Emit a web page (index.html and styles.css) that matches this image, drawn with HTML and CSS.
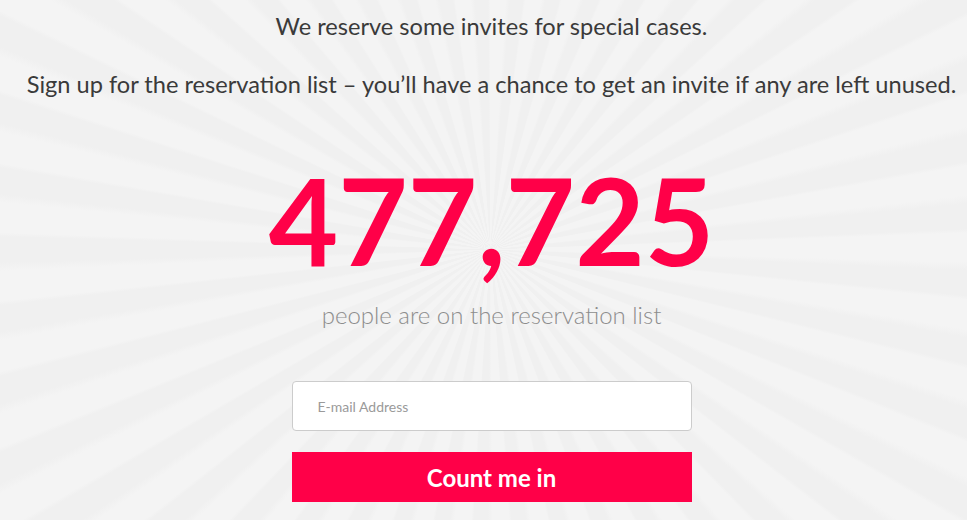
FILE: index.html
```html
<!DOCTYPE html>
<html>
<head>
<meta charset="utf-8">
<link rel="stylesheet" href="styles.css">
</head>
<body>
<main class="page">
  <p class="lead">We reserve some invites for special cases.</p>
  <p class="lead">Sign up for the reservation list – you’ll have a chance to get an invite if any are left unused.</p>
  <div class="count">477,725</div>
  <p class="sub">people are on the reservation list</p>
  <form class="form">
    <input class="email" type="text" placeholder="E-mail Address">
    <button class="btn" type="button">Count me in</button>
  </form>
</main>
</body>
</html>
```

FILE: styles.css
```css
html, body {
  margin: 0;
  padding: 0;
  height: 100%;
}
body {
  font-family: Lato, "Open Sans", sans-serif;
  background: repeating-conic-gradient(from 0deg at 50.7% 48%, #f4f4f4 0deg 3.5deg, #f0f0f0 4.5deg 7.5deg, #f4f4f4 8deg);
  overflow: hidden;
}
.page {
  display: flex;
  flex-direction: column;
  align-items: center;
  padding-top: 10px;
  padding-left: 16px;
}
.lead {
  margin: 0 0 26px;
  font-size: 23.6px;
  line-height: 32px;
  font-weight: 400;
  color: #3a3a3a;
  white-space: nowrap;
}
.count {
  margin-top: 34px;
  font-size: 120px;
  font-weight: 700;
  line-height: 1;
  color: #ff0048;
}
.sub {
  margin: 20px 0 0;
  font-size: 24px;
  font-weight: 300;
  color: #8d8d8d;
}
.form {
  display: flex;
  flex-direction: column;
  gap: 21px;
  margin-top: 52px;
  width: 400px;
}
.email {
  box-sizing: border-box;
  height: 50px;
  border: 1px solid #cccccc;
  border-radius: 4px;
  padding: 0 25px;
  font-family: Lato, sans-serif;
  font-size: 14px;
  background: #fff;
}
.email::placeholder {
  color: #9a9a9a;
}
.btn {
  height: 50px;
  border: 0;
  background: #ff0048;
  color: #fff;
  font-family: Lato, sans-serif;
  font-weight: 700;
  font-size: 24px;
}
```
